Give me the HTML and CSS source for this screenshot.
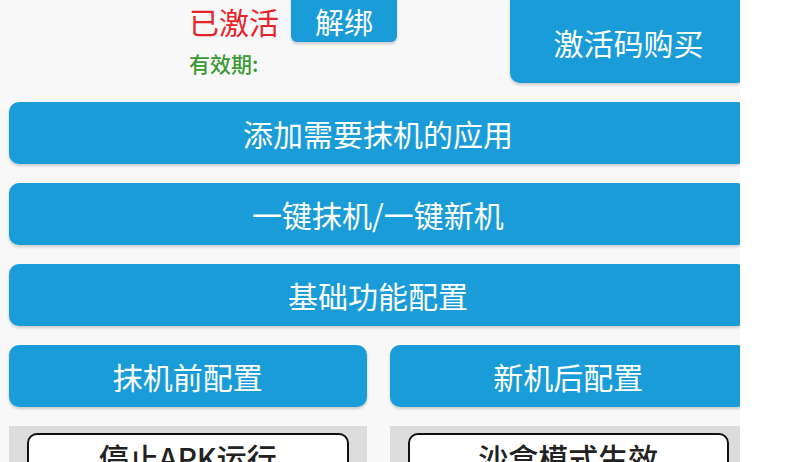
FILE: index.html
```html
<!DOCTYPE html>
<html lang="zh-CN">
<head>
    <meta charset="UTF-8">
    <title>一键新机</title>
    <link rel="stylesheet" href="styles.css">
</head>
<body>
    <div class="screen">
        <div class="content">
            <!-- 激活状态 -->
            <div class="top-row">
                <div class="status">
                    <div class="status-line">
                        <span class="activated">已激活</span>
                        <div class="btn unbind">解绑</div>
                    </div>
                    <div class="expire">有效期:</div>
                </div>
                <div class="btn buy">激活码购买</div>
            </div>

            <div class="btn wide">添加需要抹机的应用</div>
            <div class="btn wide">一键抹机/一键新机</div>
            <div class="btn wide">基础功能配置</div>

            <div class="pair">
                <div class="btn">抹机前配置</div>
                <div class="btn">新机后配置</div>
            </div>

            <!-- 开关 -->
            <div class="pair">
                <div class="toggle-panel"><div class="toggle">停止APK运行</div></div>
                <div class="toggle-panel"><div class="toggle">沙盒模式生效</div></div>
            </div>
        </div>
    </div>
</body>
</html>
```

FILE: styles.css
```css
body {
    margin: 0;
    padding: 0;
    background-color: #ffffff;
    font-family: "Noto Sans CJK SC", "Noto Sans", sans-serif;
}
.screen {
    width: 740px;
    height: 462px;
    overflow: hidden;
    background-color: #f8f8f8;
}
.content {
    width: 738px;
    padding: 0 9px;
    display: flex;
    flex-direction: column;
    gap: 19px;
}
.btn {
    background-color: #1a9cd8;
    color: white;
    border-radius: 10px;
    font-size: 30px;
    display: flex;
    align-items: center;
    justify-content: center;
    box-shadow: 0 2px 3px rgba(0, 0, 0, 0.18);
}
.top-row {
    display: flex;
    height: 83px;
}
.status {
    flex: 1;
    padding-left: 180px;
}
.status-line {
    display: flex;
    align-items: flex-end;
    height: 42px;
}
.activated {
    color: #e8232a;
    font-size: 30px;
    line-height: 42px;
    margin-right: 12px;
}
.btn.unbind {
    width: 106px;
    height: 52px;
    margin-top: -10px;
    font-size: 29px;
    padding-top: 10px;
    box-sizing: border-box;
    border-radius: 6px;
}
.expire {
    color: #3a9a34;
    font-size: 21px;
    font-weight: 500;
    line-height: 26px;
    margin-top: 8px;
}
.btn.buy {
    width: 237px;
    height: 93px;
    margin-top: -10px;
    padding-top: 10px;
    box-sizing: border-box;
}
.btn.wide {
    height: 62px;
}
.pair {
    display: grid;
    grid-template-columns: 1fr 1fr;
    gap: 23px;
}
.pair .btn {
    height: 62px;
}
.toggle-panel {
    background-color: #dcdcdc;
    padding: 7px 18px 0;
    height: 60px;
}
.toggle {
    background-color: white;
    border: 2px solid #111;
    border-radius: 10px;
    height: 56px;
    font-size: 30px;
    font-weight: 500;
    color: #222;
    text-align: center;
    line-height: 44px;
}
```
